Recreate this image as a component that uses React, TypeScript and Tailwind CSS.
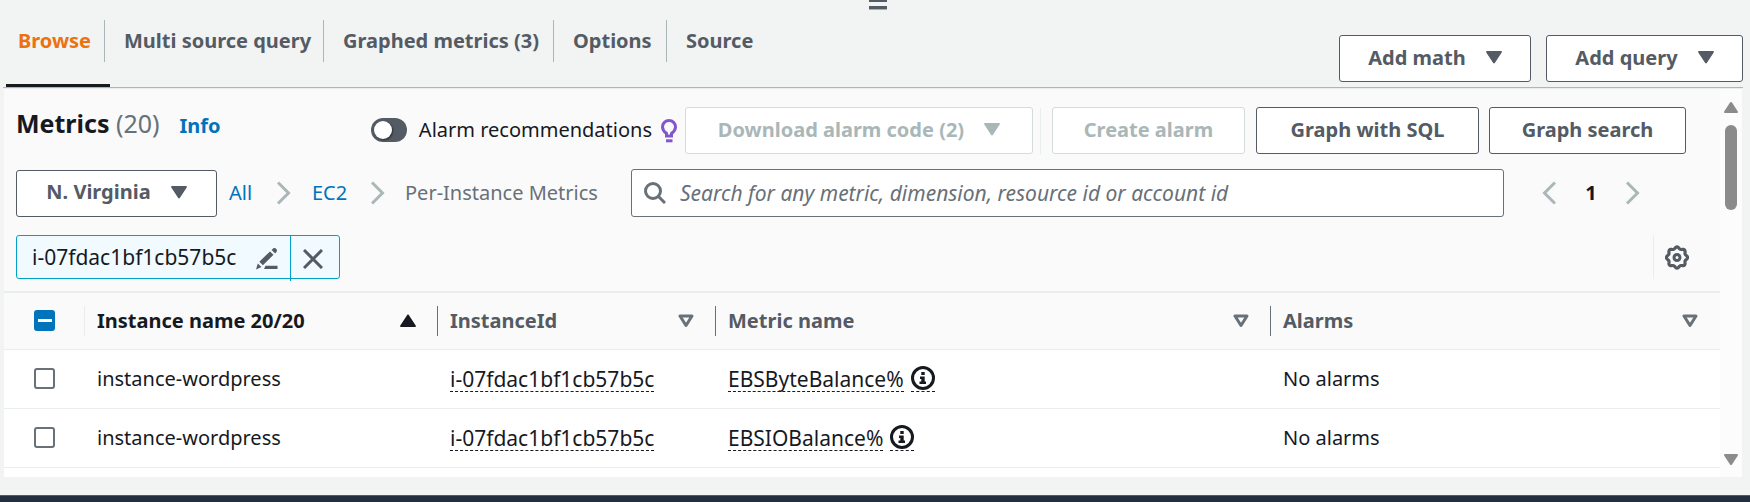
import { useState, type ReactNode } from 'react';

function Caret({ className = '' }: { className?: string }) {
  return (
    <svg width="16" height="13" viewBox="0 0 16 13" className={`shrink-0 ${className}`} fill="currentColor" aria-hidden="true">
      <path d="M1 0h14c.9 0 1.2.8.7 1.4L8.8 12c-.4.6-1.200.6-1.600 0L.3 1.400C-.2.8.1 0 1 0z" />
    </svg>
  );
}

function SortOutline() {
  return (
    <svg width="16" height="14" viewBox="0 0 16 14" className="shrink-0 text-[#687078]" fill="none" stroke="currentColor" strokeWidth="3" strokeLinejoin="round" aria-hidden="true">
      <path d="M2 2h12L8 11.500z" />
    </svg>
  );
}

function Chevron({ left = false }: { left?: boolean }) {
  return (
    <svg width="14" height="24" viewBox="0 0 14 24" className="shrink-0 text-[#aab7b8]" fill="none" stroke="currentColor" strokeWidth="3" aria-hidden="true">
      <path d={left ? 'M13 1.500L2.500 12 13 22.500' : 'M1 1.500L11.500 12 1 22.500'} />
    </svg>
  );
}

function ActionButton({ children, className, disabled = false, caret = false }: { children: ReactNode; className: string; disabled?: boolean; caret?: boolean }) {
  const tone = disabled ? 'border-[#d5dbdb] text-[#aab7b8]' : 'border-[#545b64] text-[#545b64]';
  return (
    <button type="button" disabled={disabled} className={`flex h-[47px] shrink-0 items-center justify-center gap-5 rounded-[3px] border bg-white pb-0.5 font-bold whitespace-nowrap ${tone} ${className}`}>
      {children}
      {caret && <Caret />}
    </button>
  );
}

function InfoIcon() {
  return (
    <svg width="24" height="26" viewBox="0 0 24 26" fill="none" stroke="currentColor" aria-hidden="true">
      <circle cx="12" cy="13" r="10.500" strokeWidth="3" />
      <path d="M10.300 7h3.400v3h-3.400zM9 11.500h4.700v5H15V19H8.500v-2.500h1.800V14H9z" fill="currentColor" stroke="none" />
    </svg>
  );
}

const gearPath = (() => {
  const points: string[] = [];
  for (let i = 0; i < 96; i++) {
    const a = (i / 96) * Math.PI * 2;
    const r = 9.7 + 0.9 * Math.cos(a * 8);
    points.push(`${(12 + r * Math.cos(a)).toFixed(2)} ${(12.5 + r * Math.sin(a)).toFixed(2)}`);
  }
  return `M${points.join('L')}z`;
})();

const tabs = [
  { label: 'Browse', width: 'w-[99px]' },
  { label: 'Multi source query', width: 'w-[219px]' },
  { label: 'Graphed metrics (3)', width: 'w-[230px]' },
  { label: 'Options', width: 'w-[113px]' },
  { label: 'Source', width: 'w-[113px]' },
];

const columns = [
  { label: 'Instance name 20/20', sorted: true },
  { label: 'InstanceId', sorted: false },
  { label: 'Metric name', sorted: false },
  { label: 'Alarms', sorted: false },
];

const rows = [
  { name: 'instance-wordpress', id: 'i-07fdac1bf1cb57b5c', metric: 'EBSByteBalance%', alarms: 'No alarms' },
  { name: 'instance-wordpress', id: 'i-07fdac1bf1cb57b5c', metric: 'EBSIOBalance%', alarms: 'No alarms' },
];

function Header() {
  return (
    <header className="mr-[7px] ml-[3px] flex h-[88px] shrink-0 items-end justify-between border-b border-[#aab7b8]">
      <div role="tablist" className="ml-[3px] flex h-[67px] items-start">
        {tabs.map((tab, i) => (
          <div key={tab.label} className={`flex h-[67px] flex-col justify-between ${tab.width}`}>
            <button
              type="button"
              role="tab"
              aria-selected={i === 0}
              className={`flex h-[42px] w-full items-center font-bold whitespace-nowrap ${i === 0 ? 'pl-3 text-[#ec7211]' : 'pl-[19px] text-[#545b64]'} ${i < tabs.length - 1 ? 'border-r border-[#aab7b8]' : ''}`}
            >
              {tab.label}
            </button>
            {i === 0 && <div className="h-[3px] w-[104px] shrink-0 bg-[#16191f]" />}
          </div>
        ))}
      </div>
      <div className="mb-[5px] flex gap-[15px]">
        <ActionButton caret className="w-[192px]">Add math</ActionButton>
        <ActionButton caret className="w-[197px]">Add query</ActionButton>
      </div>
    </header>
  );
}

function TitleRow() {
  const [on, setOn] = useState(false);
  return (
    <div className="flex items-center justify-between pr-[34px] pl-3">
      <div className="flex items-baseline gap-5 pb-3">
        <h2 className="text-[25px] font-bold text-[#16191f]">
          Metrics <span className="font-normal text-[#687078]">(20)</span>
        </h2>
        <a href="#info" className="font-bold text-[#0073bb]">Info</a>
      </div>
      <div className="flex items-center">
        <label className="flex items-center gap-3 pb-0.5 whitespace-nowrap text-[#16191f]">
          <input type="checkbox" role="switch" checked={on} onChange={() => setOn(!on)} className="peer sr-only" />
          <span className="flex h-6 w-9 shrink-0 items-center rounded-full bg-[#545b64] px-[3px] peer-checked:justify-end peer-checked:bg-[#0073bb]">
            <span className="h-[18px] w-[18px] rounded-full bg-white shadow-[1px_1px_2px_rgba(0,0,0,0.5)]" />
          </span>
          Alarm recommendations
        </label>
        <svg width="16" height="24" viewBox="0 0 16 24" className="ml-[9px] shrink-0 text-[#8456ce]" fill="none" stroke="currentColor" aria-hidden="true">
          <path d="M5.500 17v-2.500C3.500 13 1.500 11.300 1.500 8a6.500 6.500 0 0 1 13 0c0 3.300-2 5-4 6.500V17z" strokeWidth="3" />
          <path d="M5 21.800h6.500" strokeWidth="3" />
        </svg>
        <ActionButton disabled caret className="ml-2 w-[348px]">Download alarm code (2)</ActionButton>
        <div className="ml-[7px] h-[46px] w-px bg-[#eaeded]" />
        <ActionButton disabled className="ml-[11px] w-[193px]">Create alarm</ActionButton>
        <ActionButton className="ml-[11px] w-[223px]">Graph with SQL</ActionButton>
        <ActionButton className="ml-[10px] w-[197px]">Graph search</ActionButton>
      </div>
    </div>
  );
}

function FilterRow() {
  return (
    <div className="mt-[15px] flex items-center pr-20 pl-3">
      <ActionButton caret className="w-[201px]">N. Virginia</ActionButton>
      <nav aria-label="Breadcrumb" className="ml-3 flex w-[402px] items-center whitespace-nowrap text-[#0073bb]">
        <a href="#all" className="w-12">All</a>
        <Chevron />
        <a href="#ec2" className="ml-[21px] w-[59px]">EC2</a>
        <Chevron />
        <span className="ml-5 text-[#687078]">Per-Instance Metrics</span>
      </nav>
      <label className="flex h-12 min-w-0 flex-1 items-center gap-[14px] rounded-[3px] border border-[#687078] bg-white px-3">
        <svg width="22" height="22" viewBox="0 0 22 22" className="shrink-0 text-[#687078]" fill="none" stroke="currentColor" strokeWidth="3" aria-label="Search">
          <circle cx="9" cy="9" r="7.500" />
          <path d="M14.300 14.300L21 21" />
        </svg>
        <input
          type="text"
          aria-label="Search metrics"
          placeholder="Search for any metric, dimension, resource id or account id"
          className="min-w-0 flex-1 bg-transparent text-[21px] outline-none placeholder:text-[#687078] placeholder:italic"
        />
      </label>
      <div className="ml-[38px] flex items-center">
        <button type="button" aria-label="Previous page"><Chevron left /></button>
        <button type="button" className="w-[70px] text-center font-bold text-[#16191f]">1</button>
        <button type="button" aria-label="Next page"><Chevron /></button>
      </div>
    </div>
  );
}

function ChipRow() {
  return (
    <div className="mt-[18px] flex items-center justify-between pr-[31px] pb-3 pl-3">
      <div className="flex h-11 items-center rounded-[3px] border border-[#00a1c9] bg-[#f1faff] text-[#16191f]">
        <span className="w-[224px] pl-[15px] text-[21px] whitespace-nowrap">i-07fdac1bf1cb57b5c</span>
        <button type="button" aria-label="Edit filter" className="flex w-[49px] items-center pt-1 pl-[15px] text-[#545b64]">
          <svg width="22" height="22" viewBox="0 0 22 22" fill="currentColor" aria-hidden="true">
            <path d="M1.800 15.500L5.500 19 0 21.500zM3.300 13.700L14 3.400l3.500 3.400L6.900 17.300zM15.600 1.900l1-1a2.400 2.400 0 0 1 3.600 3.400l-1.100 1.100zM9.500 17.800h12V21H8z" />
          </svg>
        </button>
        <button type="button" aria-label="Remove filter" className="flex h-[45px] w-[49px] items-center self-start border-l border-[#00a1c9] pl-3 text-[#545b64]">
          <svg width="20" height="20" viewBox="0 0 20 20" fill="none" stroke="currentColor" strokeWidth="3" aria-hidden="true">
            <path d="M1 1l18 18M19 1L1 19" />
          </svg>
        </button>
      </div>
      <button type="button" aria-label="Preferences" className="flex h-11 items-center border-l border-[#eaeded] pl-[11px] text-[#545b64]">
        <svg width="24" height="25" viewBox="0 0 24 25" fill="none" stroke="currentColor" aria-hidden="true">
          <path d={gearPath} strokeWidth="3.200" />
          <circle cx="12" cy="12.500" r="3" strokeWidth="3" />
        </svg>
      </button>
    </div>
  );
}

function MetricsTable() {
  return (
    <table className="w-full table-fixed border-collapse text-left text-[#16191f]">
      <colgroup>
        <col className="w-[81px]" />
        <col className="w-[353px]" />
        <col className="w-[278px]" />
        <col className="w-[555px]" />
        <col />
      </colgroup>
      <thead>
        <tr className="h-[57px] border-t-2 border-b border-[#eaeded]">
          <th className="p-0">
            <div className="flex h-[30px] items-center border-r border-[#eaeded] pl-[30px]">
              <div className="grid place-items-center">
                <input type="checkbox" aria-label="Select all metrics" aria-checked="mixed" className="col-start-1 row-start-1 h-[21px] w-[21px] appearance-none rounded-[3px] bg-[#0073bb]" />
                <span className="pointer-events-none col-start-1 row-start-1 h-[3px] w-[14px] bg-white" />
              </div>
            </div>
          </th>
          {columns.map((col, i) => (
            <th key={col.label} className="p-0">
              <div className={`flex h-[30px] items-center justify-between pl-3 font-bold ${i < columns.length - 1 ? 'border-r border-[#687078] pr-[21px]' : 'pr-[22px]'} ${col.sorted ? '' : 'text-[#545b64]'}`}>
                {col.label}
                {col.sorted ? <Caret className="rotate-180" /> : <SortOutline />}
              </div>
            </th>
          ))}
        </tr>
      </thead>
      <tbody className="bg-white">
        {rows.map((row) => (
          <tr key={row.metric} className="h-[59px] border-b border-[#eaeded]">
            <td className="p-0">
              <div className="flex pl-[30px]">
                <input type="checkbox" aria-label={`Select ${row.metric}`} className="h-[21px] w-[21px] appearance-none rounded-[3px] border-2 border-[#687078] bg-white checked:bg-[#0073bb]" />
              </div>
            </td>
            <td className="p-0 pl-3">{row.name}</td>
            <td className="p-0 pl-3">
              <div className="flex text-[21px]">
                <span className="h-[27px] border-b border-dashed border-[#16191f]">{row.id}</span>
              </div>
            </td>
            <td className="p-0 pl-3">
              <div className="flex gap-[7px] text-[21px]">
                <span className="h-[27px] border-b border-dashed border-[#16191f]">{row.metric}</span>
                <span className="h-[27px] border-b border-dashed border-[#16191f]"><InfoIcon /></span>
              </div>
            </td>
            <td className="p-0 pl-3">{row.alarms}</td>
          </tr>
        ))}
      </tbody>
    </table>
  );
}

function Scrollbar() {
  return (
    <div className="flex w-[22px] shrink-0 flex-col items-center bg-[#fcfcfc] pt-[13px] pb-3 text-[#8b8b8b]" aria-hidden="true">
      <svg width="14" height="11" viewBox="0 0 14 11" fill="currentColor"><path d="M6 .6c.5-.7 1.500-.7 2 0l5.700 8.600c.5.9.1 1.800-.9 1.800H1.200c-1 0-1.400-.9-.9-1.800z" /></svg>
      <div className="mt-3 h-[85px] w-3 rounded-full bg-[#8b8b8b]" />
      <svg width="14" height="11" viewBox="0 0 14 11" fill="currentColor" className="mt-auto"><path d="M6 10.400c.5.7 1.500.7 2 0l5.700-8.600C14.200.9 13.800 0 12.800 0H1.200C.2 0-.2.9.3 1.800z" /></svg>
    </div>
  );
}

export default function App() {
  return (
    <div className="flex h-screen flex-col bg-[#f2f3f3] font-['Noto_Sans','Open_Sans',sans-serif] text-xl leading-7">
      <div className="absolute top-0 left-1/2 flex w-[18px] -translate-x-[6px] flex-col gap-1" aria-hidden="true">
        <div className="h-[2px] bg-[#545b64]" />
        <div className="h-1 border-b border-[#aab0b5] bg-[#545b64]" />
      </div>
      <Header />
      <main className="mr-2 ml-1 flex min-h-0 flex-1 overflow-hidden border-t border-[#eaeded] bg-white">
        <section className="min-w-0 flex-1">
          <div className="bg-[#fafafa] pt-[18px]">
            <TitleRow />
            <FilterRow />
            <ChipRow />
            <MetricsTable />
          </div>
        </section>
        <Scrollbar />
      </main>
      <footer className="mt-[18px] h-[7px] shrink-0 border-t border-[#545b64] bg-[#232f3e]" />
    </div>
  );
}
